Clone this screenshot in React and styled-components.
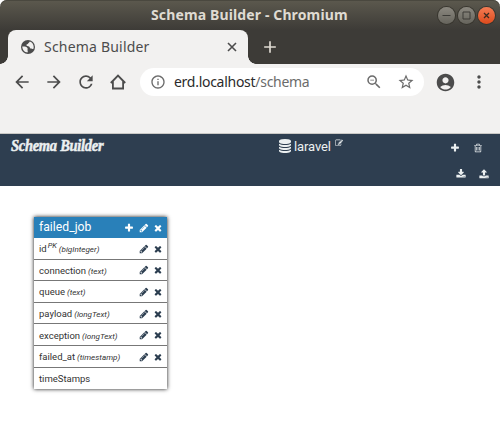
import React from "react";
import styled, { createGlobalStyle } from "styled-components";
import {
  MdAdd, MdArrowBack, MdArrowForward, MdRefresh,
  MdInfoOutline, MdZoomOut, MdStarBorder, MdAccountCircle, MdMoreVert,
} from "react-icons/md";

const GlobalStyle = createGlobalStyle`
  * { box-sizing: border-box; }
  body { margin: 0; background: #fff; font-family: Roboto, sans-serif; overflow: hidden; }
  svg { display: block; flex: none; }
`;

const glyphs = {
  plus: "M1600 736v192q0 40-28 68t-68 28h-416v416q0 40-28 68t-68 28h-192q-40 0-68-28t-28-68v-416h-416q-40 0-68-28t-28-68v-192q0-40 28-68t68-28h416v-416q0-40 28-68t68-28h192q40 0 68 28t28 68v416h416q40 0 68 28t28 68z",
  times: "M1490 1322q0 40-28 68l-136 136q-28 28-68 28t-68-28l-294-294-294 294q-28 28-68 28t-68-28l-136-136q-28-28-28-68t28-68l294-294-294-294q-28-28-28-68t28-68l136-136q28-28 68-28t68 28l294 294 294-294q28-28 68-28t68 28l136 136q28 28 28 68t-28 68l-294 294 294 294q28 28 28 68z",
  pencil: "M491 1536l91-91-235-235-91 91v107h128v128h107zm523-928q0-22-22-22-10 0-17 7l-542 542q-7 7-7 17 0 22 22 22 10 0 17-7l542-542q7-7 7-17zm-54-192l416 416-832 832h-416v-416zm683 96q0 53-37 90l-166 166-416-416 166-165q36-38 90-38 53 0 91 38l235 234q37 39 37 91z",
  database: "M896 768q237 0 443-43t325-127v170q0 69-103 128t-280 93.5-385 34.5-385-34.5-280-93.5-103-128v-170q119 84 325 127t443 43zm0 768q237 0 443-43t325-127v170q0 69-103 128t-280 93.5-385 34.5-385-34.5-280-93.5-103-128v-170q119 84 325 127t443 43zm0-384q237 0 443-43t325-127v170q0 69-103 128t-280 93.5-385 34.5-385-34.5-280-93.5-103-128v-170q119 84 325 127t443 43zm0-1152q208 0 385 34.5t280 93.5 103 128v128q0 69-103 128t-280 93.5-385 34.5-385-34.5-280-93.5-103-128v-128q0-69 103-128t280-93.5 385-34.5z",
  trash: "M704 736v576q0 14-9 23t-23 9h-64q-14 0-23-9t-9-23v-576q0-14 9-23t23-9h64q14 0 23 9t9 23zm256 0v576q0 14-9 23t-23 9h-64q-14 0-23-9t-9-23v-576q0-14 9-23t23-9h64q14 0 23 9t9 23zm256 0v576q0 14-9 23t-23 9h-64q-14 0-23-9t-9-23v-576q0-14 9-23t23-9h64q14 0 23 9t9 23zm128 724v-948h-896v948q0 22 7 40.5t14.5 27 10.5 8.5h832q3 0 10.5-8.5t14.5-27 7-40.5zm-672-1076h448l-48-117q-7-9-17-11h-317q-10 2-17 11zm928 32v64q0 14-9 23t-23 9h-96v948q0 83-47 143.5t-113 60.5h-832q-66 0-113-58.5t-47-141.5v-952h-96q-14 0-23-9t-9-23v-64q0-14 9-23t23-9h309l70-167q15-37 54-63t79-26h320q40 0 79 26t54 63l70 167h309q14 0 23 9t9 23z",
  download: "M1344 1344q0-26-19-45t-45-19-45 19-19 45 19 45 45 19 45-19 19-45zm256 0q0-26-19-45t-45-19-45 19-19 45 19 45 45 19 45-19 19-45zm128-224v320q0 40-28 68t-68 28h-1472q-40 0-68-28t-28-68v-320q0-40 28-68t68-28h465l135 136q58 56 136 56t136-56l136-136h464q40 0 68 28t28 68zm-325-569q17 41-14 70l-448 448q-18 19-45 19t-45-19l-448-448q-31-29-14-70 17-39 59-39h256v-448q0-26 19-45t45-19h256q26 0 45 19t19 45v448h256q42 0 59 39z",
  upload: "M1344 1472q0-26-19-45t-45-19-45 19-19 45 19 45 45 19 45-19 19-45zm256 0q0-26-19-45t-45-19-45 19-19 45 19 45 45 19 45-19 19-45zm128-224v320q0 40-28 68t-68 28h-1472q-40 0-68-28t-28-68v-320q0-40 28-68t68-28h427q21 56 70.5 92t110.5 36h256q61 0 110.5-36t70.5-92h427q40 0 68 28t28 68zm-325-648q-17 40-59 40h-256v448q0 26-19 45t-45 19h-256q-26 0-45-19t-19-45v-448h-256q-42 0-59-40-17-39 14-69l448-448q18-19 45-19t45 19l448 448q31 30 14 69z",
  edit: "M888 1184l116-116-152-152-116 116v56h96v96h56zm440-720q-16-16-33 1l-350 350q-17 17-1 33t33-1l350-350q17-17 1-33zm80 594v190q0 119-84.5 203.5t-203.5 84.5h-832q-119 0-203.5-84.5t-84.5-203.5v-832q0-119 84.5-203.5t203.5-84.5h832q63 0 117 25 15 7 18 23 3 17-9 29l-49 49q-14 14-32 8-23-6-45-6h-832q-66 0-113 47t-47 113v832q0 66 47 113t113 47h832q66 0 113-47t47-113v-126q0-13 9-22l64-64q15-15 35-7t20 29zm-96-738l288 288-672 672h-288v-288zm444 132l-92 92-288-288 92-92q28-28 68-28t68 28l152 152q28 28 28 68t-28 68z",
};

const Glyph = ({ name, size = 10 }) => (
  <svg width={size} height={size} viewBox="0 0 1792 1792" fill="currentColor">
    <path d={glyphs[name]} />
  </svg>
);

const Frame = styled.div`
  width: 500px;
  height: 447px;
  background: #fff;
`;

const WindowTop = styled.div`
  height: 64px;
  border-radius: 7px 7px 0 0;
  background: linear-gradient(#5c594e 0, #3d3b37 30px);
  box-shadow: inset 0 1px #4a483f;
`;

const TitleBar = styled.div`
  display: grid;
  grid-template-columns: 151px 1fr auto;
  align-items: center;
  height: 30px;
  padding-right: 5px;
`;

const WindowTitle = styled.div`
  grid-column: 2;
  margin-top: -1px;
  font: 700 14px/20px "Noto Sans", sans-serif;
  letter-spacing: 0.13px;
  color: #dfdbd2;
  white-space: nowrap;
`;

const WindowControls = styled.div`
  display: flex;
  gap: 3px;
`;

const WindowButton = styled.div`
  width: 17px;
  height: 17px;
  border-radius: 50%;
  background: ${(p) => (p.$close ? "linear-gradient(#f47c54, #dd4a1c)" : "linear-gradient(#8b8880, #66645c)")};
  box-shadow: 0 0 0 1px #38362f;
`;

const TabStrip = styled.div`
  display: flex;
  height: 34px;
`;

const Tab = styled.div`
  position: relative;
  display: flex;
  align-items: center;
  width: 240px;
  height: 34px;
  margin-left: 8px;
  padding: 0 9px 0 12px;
  border-radius: 8px 8px 0 0;
  background: #f2f1f0;
  color: #4c4c4c;
  &::before, &::after {
    content: "";
    position: absolute;
    bottom: 0;
    width: 8px;
    height: 8px;
  }
  &::before { left: -8px; background: radial-gradient(circle at 0 0, transparent 7.5px, #f2f1f0 8px); }
  &::after { right: -8px; background: radial-gradient(circle at 100% 0, transparent 7.5px, #f2f1f0 8px); }
`;

const TabTitle = styled.div`
  flex: 1;
  margin-left: 8px;
  font: 400 14px/20px "Noto Sans", sans-serif;
  letter-spacing: 0.2px;
`;

const NewTab = styled.div`
  display: flex;
  align-items: center;
  margin-left: 12px;
  color: #dfdbd2;
`;

const Toolbar = styled.div`
  display: flex;
  align-items: flex-start;
  height: 70px;
  padding: 4px 0 0 12px;
  border-bottom: 1px solid #c9c8c5;
  background: #f2f1f0;
  color: #4c4c4c;
`;

const NavButtons = styled.div`
  display: flex;
  align-items: center;
  gap: 12px;
  height: 28px;
`;

const AddressBar = styled.div`
  display: flex;
  align-items: center;
  width: 284px;
  height: 28px;
  margin-left: 12px;
  padding: 0 9px 0 10px;
  border-radius: 14px;
  background: #fff;
  color: #6b6b6b;
`;

const Address = styled.div`
  flex: 1;
  margin-left: 8px;
  font: 400 14px/20px "Noto Sans", sans-serif;
  letter-spacing: -0.28px;
`;

const Host = styled.span`
  color: #2b2b2b;
`;

const AddressActions = styled.div`
  display: flex;
  gap: 14px;
`;

const BrowserActions = styled.div`
  display: flex;
  align-items: center;
  gap: 13px;
  height: 28px;
  margin-left: 11px;
`;

const AppHeader = styled.header`
  display: grid;
  grid-template-columns: 268px 1fr 70px;
  height: 52px;
  padding-left: 10px;
  background: #2e3e50;
  color: #ecf0f1;
`;

const Brand = styled.div`
  width: max-content;
  height: 24px;
  margin-left: 1px;
  font: italic 700 16px/24px "Liberation Serif", serif;
  -webkit-text-stroke: 0.5px currentColor;
  letter-spacing: -0.3px;
  transform: scaleX(0.905);
  transform-origin: left;
`;

const Database = styled.div`
  display: flex;
  align-items: center;
  height: 24px;
  font-size: 13px;
`;

const DatabaseName = styled.span`
  margin: 0 4px 0 2px;
  letter-spacing: -0.1px;
`;

const EditMark = styled.span`
  align-self: flex-start;
  margin-top: 5px;
`;

const HeaderActions = styled.div`
  display: grid;
  grid-template-rows: 27px 25px;
  justify-items: end;
`;

const ActionRow = styled.div`
  display: flex;
  align-items: center;
  gap: 13px;
  padding-right: ${(p) => p.$inset};
`;

const Canvas = styled.main`
  padding: 31px 0 0 34px;
`;

const TableCard = styled.section`
  width: 133px;
  background: #fff;
  box-shadow: 0 0 4px #111;
`;

const TableHeader = styled.div`
  display: flex;
  align-items: center;
  justify-content: space-between;
  height: 21px;
  padding: 0 4px 2px 5px;
  background: #2980b9;
  color: #fff;
  font-size: 12.2px;
`;

const FieldRow = styled.div`
  display: flex;
  align-items: center;
  justify-content: space-between;
  height: 21.6px;
  padding: 1px 4px 0 5px;
  border-bottom: 1px solid #777;
  color: #333;
  font-size: 9.5px;
  white-space: nowrap;
  &:last-child { border-bottom: 0; }
`;

const FieldType = styled.i`
  font-size: 8.1px;
  margin-left: 2px;
`;

const KeyMark = styled.sup`
  font-size: 7.5px;
  font-style: italic;
  line-height: 0;
  margin-left: 1px;
`;

const RowIcons = styled.div`
  display: flex;
  gap: 4.5px;
  margin-top: ${(p) => p.$drop || 0};
  color: ${(p) => p.$color};
`;

const fields = [
  { name: "id", type: "bigInteger", primary: true },
  { name: "connection", type: "text" },
  { name: "queue", type: "text" },
  { name: "payload", type: "longText" },
  { name: "exception", type: "longText" },
  { name: "failed_at", type: "timestamp" },
  { name: "timeStamps" },
];

const HomeIcon = () => (
  <svg width="20" height="20" viewBox="0 0 20 20" fill="none" stroke="currentColor" strokeWidth="1.8">
    <path d="M2.8 11 10 3.6l7.2 7.4M4.9 9.4v7.1h10.2V9.4" />
  </svg>
);

const CloseIcon = () => (
  <svg width="14" height="14" viewBox="0 0 14 14" fill="none" stroke="currentColor" strokeWidth="1.6">
    <path d="m3 3 8 8m0-8-8 8" />
  </svg>
);

const GlobeIcon = () => (
  <svg width="16" height="16" viewBox="0 0 16 16">
    <circle cx="8" cy="8" r="7" fill="currentColor" />
    <path
      d="M2.3 7.6c2.4-.2 4.3.3 5.1 1.4.7 1-.2 1.7.2 2.6.3.6.3 1.3-.1 2-2.9-.2-5.2-2.7-5.2-6ZM9.8 2.5c2.3.8 3.9 2.9 3.9 5.5 0 .8-.1 1.5-.4 2.1-.7-.6-1.9-.2-2.8-.7-1-.5-.5-1.5-1.5-1.9-1-.5-2.6-.2-2.6-1.4 0-1.1 1.4-.8 1.8-1.6.3-.7 1-.9 1.6-2Z"
      fill="#f2f1f0"
    />
  </svg>
);

export default function App() {
  return (
    <>
      <GlobalStyle />
      <Frame>
        <WindowTop>
          <TitleBar>
            <WindowTitle>Schema Builder - Chromium</WindowTitle>
            <WindowControls>
              <WindowButton>
                <svg width="17" height="17" stroke="#3c3b37"><path d="M4.5 8.5h8" /></svg>
              </WindowButton>
              <WindowButton>
                <svg width="17" height="17" stroke="#3c3b37" fill="none"><path d="M5 5h7v7H5z" /></svg>
              </WindowButton>
              <WindowButton $close>
                <svg width="17" height="17" stroke="#3c2b20" strokeWidth="1.3"><path d="m6 6 5 5m0-5-5 5" /></svg>
              </WindowButton>
            </WindowControls>
          </TitleBar>
          <TabStrip>
            <Tab>
              <GlobeIcon />
              <TabTitle>Schema Builder</TabTitle>
              <CloseIcon />
            </Tab>
            <NewTab><MdAdd size={20} /></NewTab>
          </TabStrip>
        </WindowTop>
        <Toolbar>
          <NavButtons>
            <MdArrowBack size={20} />
            <MdArrowForward size={20} />
            <MdRefresh size={20} />
            <HomeIcon />
          </NavButtons>
          <AddressBar>
            <MdInfoOutline size={16} />
            <Address><Host>erd.localhost</Host>/schema</Address>
            <AddressActions>
              <MdZoomOut size={18} />
              <MdStarBorder size={18} />
            </AddressActions>
          </AddressBar>
          <BrowserActions>
            <MdAccountCircle size={21} />
            <MdMoreVert size={20} />
          </BrowserActions>
        </Toolbar>
        <AppHeader>
          <Brand>Schema Builder</Brand>
          <Database>
            <Glyph name="database" size={14} />
            <DatabaseName>laravel</DatabaseName>
            <EditMark><Glyph name="edit" size={8} /></EditMark>
          </Database>
          <HeaderActions>
            <ActionRow $inset="17px">
              <Glyph name="plus" />
              <Glyph name="trash" />
            </ActionRow>
            <ActionRow $inset="11px">
              <Glyph name="download" />
              <Glyph name="upload" />
            </ActionRow>
          </HeaderActions>
        </AppHeader>
        <Canvas>
          <TableCard>
            <TableHeader>
              <span>failed_job</span>
              <RowIcons $color="#fff" $drop="2px">
                <Glyph name="plus" />
                <Glyph name="pencil" />
                <Glyph name="times" />
              </RowIcons>
            </TableHeader>
            {fields.map((field) => (
              <FieldRow key={field.name}>
                <span>
                  {field.name}
                  {field.primary && <KeyMark>PK</KeyMark>}
                  {field.type && <FieldType>({field.type})</FieldType>}
                </span>
                {field.type && (
                  <RowIcons $color="#2c3e50">
                    <Glyph name="pencil" />
                    <Glyph name="times" />
                  </RowIcons>
                )}
              </FieldRow>
            ))}
          </TableCard>
        </Canvas>
      </Frame>
    </>
  );
}
